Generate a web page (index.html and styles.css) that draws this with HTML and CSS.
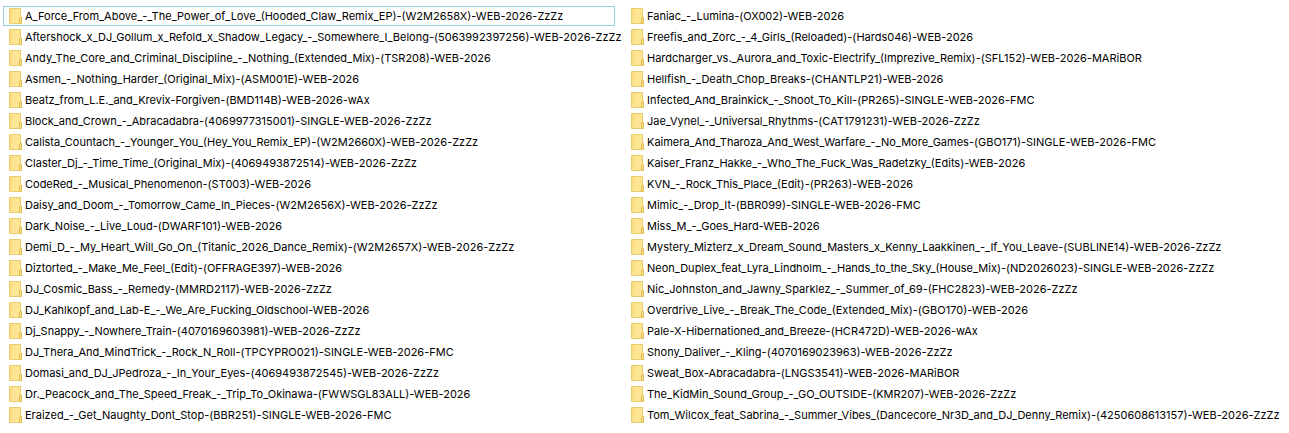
FILE: index.html
```html
<!DOCTYPE html>
<html lang="en">
<head>
  <meta charset="UTF-8">
  <meta name="viewport" content="width=device-width, initial-scale=1.0">
  <title>Folders</title>
  <link rel="stylesheet" href="styles.css">
</head>
<body>
  <svg class="sprite" width="0" height="0" aria-hidden="true">
    <symbol id="folder" viewBox="0 0 13 16">
      <path d="M0.5 0.5H11.5V9.5H12.5V15.5H0.5Z" fill="#fde594" stroke="#e9cd6c"/>
      <path d="M1 1H4L2 15H1Z" fill="#fbdc82"/>
      <path d="M10.5 15.5V10L11.5 9.5H12.5V15.5Z" fill="#fbe38d" stroke="#dfbd52"/>
    </symbol>
  </svg>
  <ul class="file-list">
    <li class="item focused"><svg class="icon"><use href="#folder"/></svg><span>A_Force_From_Above_-_The_Power_of_Love_(Hooded_Claw_Remix_EP)-(W2M2658X)-WEB-2026-ZzZz</span></li>
    <li class="item"><svg class="icon"><use href="#folder"/></svg><span>Aftershock_x_DJ_Gollum_x_Refold_x_Shadow_Legacy_-_Somewhere_I_Belong-(5063992397256)-WEB-2026-ZzZz</span></li>
    <li class="item"><svg class="icon"><use href="#folder"/></svg><span>Andy_The_Core_and_Criminal_Discipline_-_Nothing_(Extended_Mix)-(TSR208)-WEB-2026</span></li>
    <li class="item"><svg class="icon"><use href="#folder"/></svg><span>Asmen_-_Nothing_Harder_(Original_Mix)-(ASM001E)-WEB-2026</span></li>
    <li class="item"><svg class="icon"><use href="#folder"/></svg><span>Beatz_from_L.E._and_Krevix-Forgiven-(BMD114B)-WEB-2026-wAx</span></li>
    <li class="item"><svg class="icon"><use href="#folder"/></svg><span>Block_and_Crown_-_Abracadabra-(4069977315001)-SINGLE-WEB-2026-ZzZz</span></li>
    <li class="item"><svg class="icon"><use href="#folder"/></svg><span>Calista_Countach_-_Younger_You_(Hey_You_Remix_EP)-(W2M2660X)-WEB-2026-ZzZz</span></li>
    <li class="item"><svg class="icon"><use href="#folder"/></svg><span>Claster_Dj_-_Time_Time_(Original_Mix)-(4069493872514)-WEB-2026-ZzZz</span></li>
    <li class="item"><svg class="icon"><use href="#folder"/></svg><span>CodeRed_-_Musical_Phenomenon-(ST003)-WEB-2026</span></li>
    <li class="item"><svg class="icon"><use href="#folder"/></svg><span>Daisy_and_Doom_-_Tomorrow_Came_In_Pieces-(W2M2656X)-WEB-2026-ZzZz</span></li>
    <li class="item"><svg class="icon"><use href="#folder"/></svg><span>Dark_Noise_-_Live_Loud-(DWARF101)-WEB-2026</span></li>
    <li class="item"><svg class="icon"><use href="#folder"/></svg><span>Demi_D_-_My_Heart_Will_Go_On_(Titanic_2026_Dance_Remix)-(W2M2657X)-WEB-2026-ZzZz</span></li>
    <li class="item"><svg class="icon"><use href="#folder"/></svg><span>Diztorted_-_Make_Me_Feel_(Edit)-(OFFRAGE397)-WEB-2026</span></li>
    <li class="item"><svg class="icon"><use href="#folder"/></svg><span>DJ_Cosmic_Bass_-_Remedy-(MMRD2117)-WEB-2026-ZzZz</span></li>
    <li class="item"><svg class="icon"><use href="#folder"/></svg><span>DJ_Kahlkopf_and_Lab-E_-_We_Are_Fucking_Oldschool-WEB-2026</span></li>
    <li class="item"><svg class="icon"><use href="#folder"/></svg><span>Dj_Snappy_-_Nowhere_Train-(4070169603981)-WEB-2026-ZzZz</span></li>
    <li class="item"><svg class="icon"><use href="#folder"/></svg><span>DJ_Thera_And_MindTrick_-_Rock_N_Roll-(TPCYPRO021)-SINGLE-WEB-2026-FMC</span></li>
    <li class="item"><svg class="icon"><use href="#folder"/></svg><span>Domasi_and_DJ_JPedroza_-_In_Your_Eyes-(4069493872545)-WEB-2026-ZzZz</span></li>
    <li class="item"><svg class="icon"><use href="#folder"/></svg><span>Dr._Peacock_and_The_Speed_Freak_-_Trip_To_Okinawa-(FWWSGL83ALL)-WEB-2026</span></li>
    <li class="item"><svg class="icon"><use href="#folder"/></svg><span>Eraized_-_Get_Naughty_Dont_Stop-(BBR251)-SINGLE-WEB-2026-FMC</span></li>
    <li class="item"><svg class="icon"><use href="#folder"/></svg><span>Faniac_-_Lumina-(OX002)-WEB-2026</span></li>
    <li class="item"><svg class="icon"><use href="#folder"/></svg><span>Freefis_and_Zorc_-_4_Girls_(Reloaded)-(Hards046)-WEB-2026</span></li>
    <li class="item"><svg class="icon"><use href="#folder"/></svg><span>Hardcharger_vs._Aurora_and_Toxic-Electrify_(Imprezive_Remix)-(SFL152)-WEB-2026-MARiBOR</span></li>
    <li class="item"><svg class="icon"><use href="#folder"/></svg><span>Hellfish_-_Death_Chop_Breaks-(CHANTLP21)-WEB-2026</span></li>
    <li class="item"><svg class="icon"><use href="#folder"/></svg><span>Infected_And_Brainkick_-_Shoot_To_Kill-(PR265)-SINGLE-WEB-2026-FMC</span></li>
    <li class="item"><svg class="icon"><use href="#folder"/></svg><span>Jae_Vynel_-_Universal_Rhythms-(CAT1791231)-WEB-2026-ZzZz</span></li>
    <li class="item"><svg class="icon"><use href="#folder"/></svg><span>Kaimera_And_Tharoza_And_West_Warfare_-_No_More_Games-(GBO171)-SINGLE-WEB-2026-FMC</span></li>
    <li class="item"><svg class="icon"><use href="#folder"/></svg><span>Kaiser_Franz_Hakke_-_Who_The_Fuck_Was_Radetzky_(Edits)-WEB-2026</span></li>
    <li class="item"><svg class="icon"><use href="#folder"/></svg><span>KVN_-_Rock_This_Place_(Edit)-(PR263)-WEB-2026</span></li>
    <li class="item"><svg class="icon"><use href="#folder"/></svg><span>Mimic_-_Drop_It-(BBR099)-SINGLE-WEB-2026-FMC</span></li>
    <li class="item"><svg class="icon"><use href="#folder"/></svg><span>Miss_M_-_Goes_Hard-WEB-2026</span></li>
    <li class="item"><svg class="icon"><use href="#folder"/></svg><span>Mystery_Mizterz_x_Dream_Sound_Masters_x_Kenny_Laakkinen_-_If_You_Leave-(SUBLINE14)-WEB-2026-ZzZz</span></li>
    <li class="item"><svg class="icon"><use href="#folder"/></svg><span>Neon_Duplex_feat_Lyra_Lindholm_-_Hands_to_the_Sky_(House_Mix)-(ND2026023)-SINGLE-WEB-2026-ZzZz</span></li>
    <li class="item"><svg class="icon"><use href="#folder"/></svg><span>Nic_Johnston_and_Jawny_Sparklez_-_Summer_of_69-(FHC2823)-WEB-2026-ZzZz</span></li>
    <li class="item"><svg class="icon"><use href="#folder"/></svg><span>Overdrive_Live_-_Break_The_Code_(Extended_Mix)-(GBO170)-WEB-2026</span></li>
    <li class="item"><svg class="icon"><use href="#folder"/></svg><span>Pale-X-Hibernationed_and_Breeze-(HCR472D)-WEB-2026-wAx</span></li>
    <li class="item"><svg class="icon"><use href="#folder"/></svg><span>Shony_Daliver_-_Kling-(4070169023963)-WEB-2026-ZzZz</span></li>
    <li class="item"><svg class="icon"><use href="#folder"/></svg><span>Sweat_Box-Abracadabra-(LNGS3541)-WEB-2026-MARiBOR</span></li>
    <li class="item"><svg class="icon"><use href="#folder"/></svg><span>The_KidMin_Sound_Group_-_GO_OUTSIDE-(KMR207)-WEB-2026-ZzZz</span></li>
    <li class="item"><svg class="icon"><use href="#folder"/></svg><span>Tom_Wilcox_feat_Sabrina_-_Summer_Vibes_(Dancecore_Nr3D_and_DJ_Denny_Remix)-(4250608613157)-WEB-2026-ZzZz</span></li>
  </ul>
</body>
</html>
```
FILE: styles.css
```css
* { margin: 0; padding: 0; box-sizing: border-box; }
body { font-family: Inter, "Open Sans", sans-serif; font-size: 11px; line-height: 18px; background: #fff; color: #000; }
.sprite { display: block; }
.file-list { display: grid; grid-template-columns: 48% 1fr; grid-template-rows: repeat(20, 20px); grid-auto-flow: column; gap: 1px 10px; padding: 6px 11px 8px 3px; list-style: none; }
.item { display: flex; align-items: center; gap: 3px; padding: 0 5px; border: 1px solid transparent; white-space: nowrap; }
.item:hover { background: #e5f3ff; }
.focused { border-color: #99d1db; }
.icon { width: 13px; height: 16px; flex-shrink: 0; }
```
